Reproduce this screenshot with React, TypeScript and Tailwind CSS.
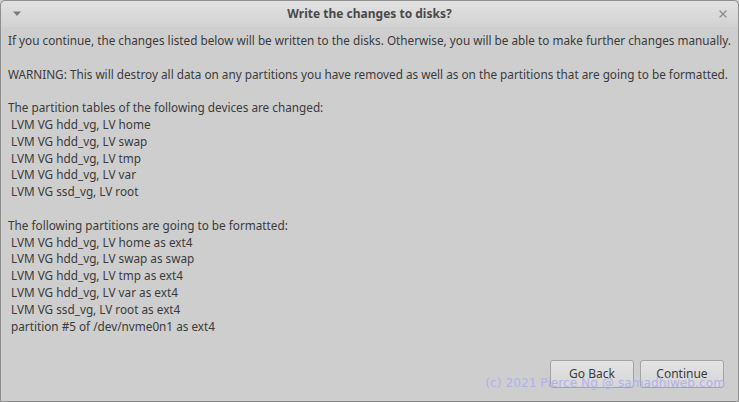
import { X } from 'lucide-react';

const tables = [
  'LVM VG hdd_vg, LV home',
  'LVM VG hdd_vg, LV swap',
  'LVM VG hdd_vg, LV tmp',
  'LVM VG hdd_vg, LV var',
  'LVM VG ssd_vg, LV root',
];

const formatted = [
  'LVM VG hdd_vg, LV home as ext4',
  'LVM VG hdd_vg, LV swap as swap',
  'LVM VG hdd_vg, LV tmp as ext4',
  'LVM VG hdd_vg, LV var as ext4',
  'LVM VG ssd_vg, LV root as ext4',
  'partition #5 of /dev/nvme0n1 as ext4',
];

function App() {
  return (
    <div className="h-[402px] w-[739px] overflow-hidden bg-[#cecece] font-['Noto_Sans',sans-serif]">
      <div className="relative flex h-full flex-col rounded-t-[5px] border border-[#8e8e8e] bg-[#cecece]">
        {/* Title bar */}
        <div className="flex h-[26px] shrink-0 items-center rounded-t-[5px] bg-gradient-to-b from-[#e2e2e2] to-[#d2d2d2] px-[10px]">
          <svg width="10" height="6" viewBox="0 0 10 6" className="ml-[1px]">
            <path d="M1 0.5 L9 0.5 L5 5 Z" fill="#7a7a7a" />
          </svg>
          <div className="flex-1 text-center text-[12px] font-bold text-[#4a4a4a]">
            Write the changes to disks?
          </div>
          <X size={12} strokeWidth={2.5} className="mr-[-1px] text-[#8a8a8a]" />
        </div>

        {/* Body */}
        <div className="flex-1 whitespace-nowrap px-[7px] pt-[5px] text-[11.75px] leading-[16.8px] text-[#3b3b3b]">
          <p>
            If you continue, the changes listed below will be written to the disks. Otherwise, you will be able to make further changes manually.
          </p>
          <p className="mt-[16.8px]">
            WARNING: This will destroy all data on any partitions you have removed as well as on the partitions that are going to be formatted.
          </p>
          <p className="mt-[16.8px]">The partition tables of the following devices are changed:</p>
          {tables.map((t) => (
            <p key={t} className="pl-[3px]">{t}</p>
          ))}
          <p className="mt-[16.8px]">The following partitions are going to be formatted:</p>
          {formatted.map((t) => (
            <p key={t} className="pl-[3px]">{t}</p>
          ))}
        </div>

        {/* Buttons */}
        <div className="flex shrink-0 justify-end gap-[6px] pr-[14px] pb-[13px]">
          <button className="h-[28px] w-[84px] rounded-[3px] border border-[#a4a4a4] bg-gradient-to-b from-[#e4e4e4] to-[#d6d6d6] pb-[1px] text-[12px] text-[#3b3b3b]">
            Go Back
          </button>
          <button className="h-[28px] w-[84px] rounded-[3px] border border-[#a4a4a4] bg-gradient-to-b from-[#e4e4e4] to-[#d6d6d6] pb-[1px] text-[12px] text-[#3b3b3b]">
            Continue
          </button>
        </div>

        {/* Watermark */}
        <div className="pointer-events-none absolute right-[13px] bottom-[9px] font-['DejaVu_Sans',sans-serif] text-[12.2px] text-[#b2b2ea]">
          (c) 2021 Pierce Ng @ samadhiweb.com
        </div>
      </div>
    </div>
  );
}

export default App;
